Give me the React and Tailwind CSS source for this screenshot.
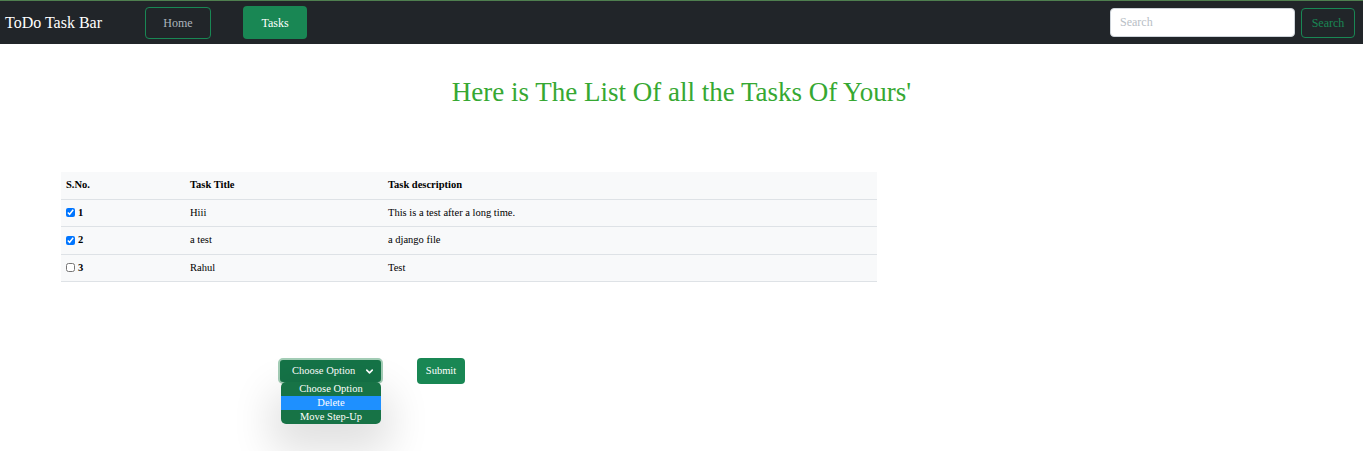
import { ChevronDown } from 'lucide-react';

const TASKS = [
  { no: 1, title: 'Hiii', desc: 'This is a test after a long time.', done: true },
  { no: 2, title: 'a test', desc: 'a django file', done: true },
  { no: 3, title: 'Rahul', desc: 'Test', done: false },
];

const OPTIONS = ['Choose Option', 'Delete', 'Move Step-Up'];

function Navbar() {
  return (
    <nav className="flex h-[44px] items-center border-t border-[#4f7f4f] bg-[#212529] pl-[5px] pr-[8px]">
      <span className="text-[16px] text-white">ToDo Task Bar</span>
      <a className="ml-[43px] flex h-[32px] w-[66px] items-center justify-center rounded-[4px] border border-[#198754] text-[12px] text-[#adb5bd]">
        Home
      </a>
      <a className="ml-[32px] flex h-[33px] w-[64px] items-center justify-center rounded-[4px] bg-[#198754] text-[12px] text-white">
        Tasks
      </a>
      <div className="ml-auto flex items-center gap-[6px]">
        <input
          placeholder="Search"
          className="h-[29px] w-[185px] rounded-[4px] border border-[#ced4da] bg-white px-[9px] text-[12px] placeholder:text-[#b8bec5]"
        />
        <button className="h-[30px] w-[54px] rounded-[4px] border border-[#198754] text-[12px] text-[#198754]">
          Search
        </button>
      </div>
    </nav>
  );
}

function TaskTable() {
  return (
    <table className="ml-[61px] mt-[64px] w-[816px] border-collapse text-[10.5px] text-black">
      <thead>
        <tr className="h-[27px] border-b border-[#dee2e6] bg-[#f8f9fa] text-left">
          <th className="w-[129px] pl-[5px] font-bold">S.No.</th>
          <th className="w-[198px] font-bold">Task Title</th>
          <th className="font-bold">Task description</th>
        </tr>
      </thead>
      <tbody>
        {TASKS.map((t) => (
          <tr key={t.no} className="h-[27.5px] border-b border-[#dee2e6] bg-[#f8f9fa]">
            <td className="pl-[5px]">
              <span className="flex items-center gap-[3px] font-bold">
                <input type="checkbox" defaultChecked={t.done} className="m-0 h-[9px] w-[9px]" />
                {t.no}
              </span>
            </td>
            <td>{t.title}</td>
            <td>{t.desc}</td>
          </tr>
        ))}
      </tbody>
    </table>
  );
}

function ActionForm() {
  return (
    <div className="ml-[278px] mt-[76px] flex items-start">
      <div className="relative">
        <div className="flex h-[26px] w-[105px] items-center justify-between rounded-[5px] border-[2px] border-[#a3cdb6] bg-[#157347] pl-[12px] pr-[6px] text-[10.5px] text-white">
          <span>Choose Option</span>
          <ChevronDown size={11} strokeWidth={3.5} />
        </div>
        <div className="absolute left-[3px] top-[24px] w-[100px] overflow-hidden rounded-[5px] bg-[#177346] text-center text-[10.5px] leading-[14px] text-white shadow-[0_18px_40px_10px_rgba(0,0,0,0.12)]">
          {OPTIONS.map((o) => (
            <div key={o} className={o === 'Delete' ? 'bg-[#1e90ff]' : ''}>
              {o}
            </div>
          ))}
        </div>
      </div>
      <button className="ml-[34px] h-[26px] w-[48px] rounded-[4px] bg-[#198754] text-[10.5px] text-white">
        Submit
      </button>
    </div>
  );
}

export default function App() {
  return (
    <div className="h-[451px] overflow-hidden bg-white font-['Liberation_Serif',serif]">
      <Navbar />
      <h1 className="mt-[32px] text-center text-[27px] leading-[32px] text-[#36a832]">
        Here is The List Of all the Tasks Of Yours'
      </h1>
      <TaskTable />
      <ActionForm />
    </div>
  );
}
